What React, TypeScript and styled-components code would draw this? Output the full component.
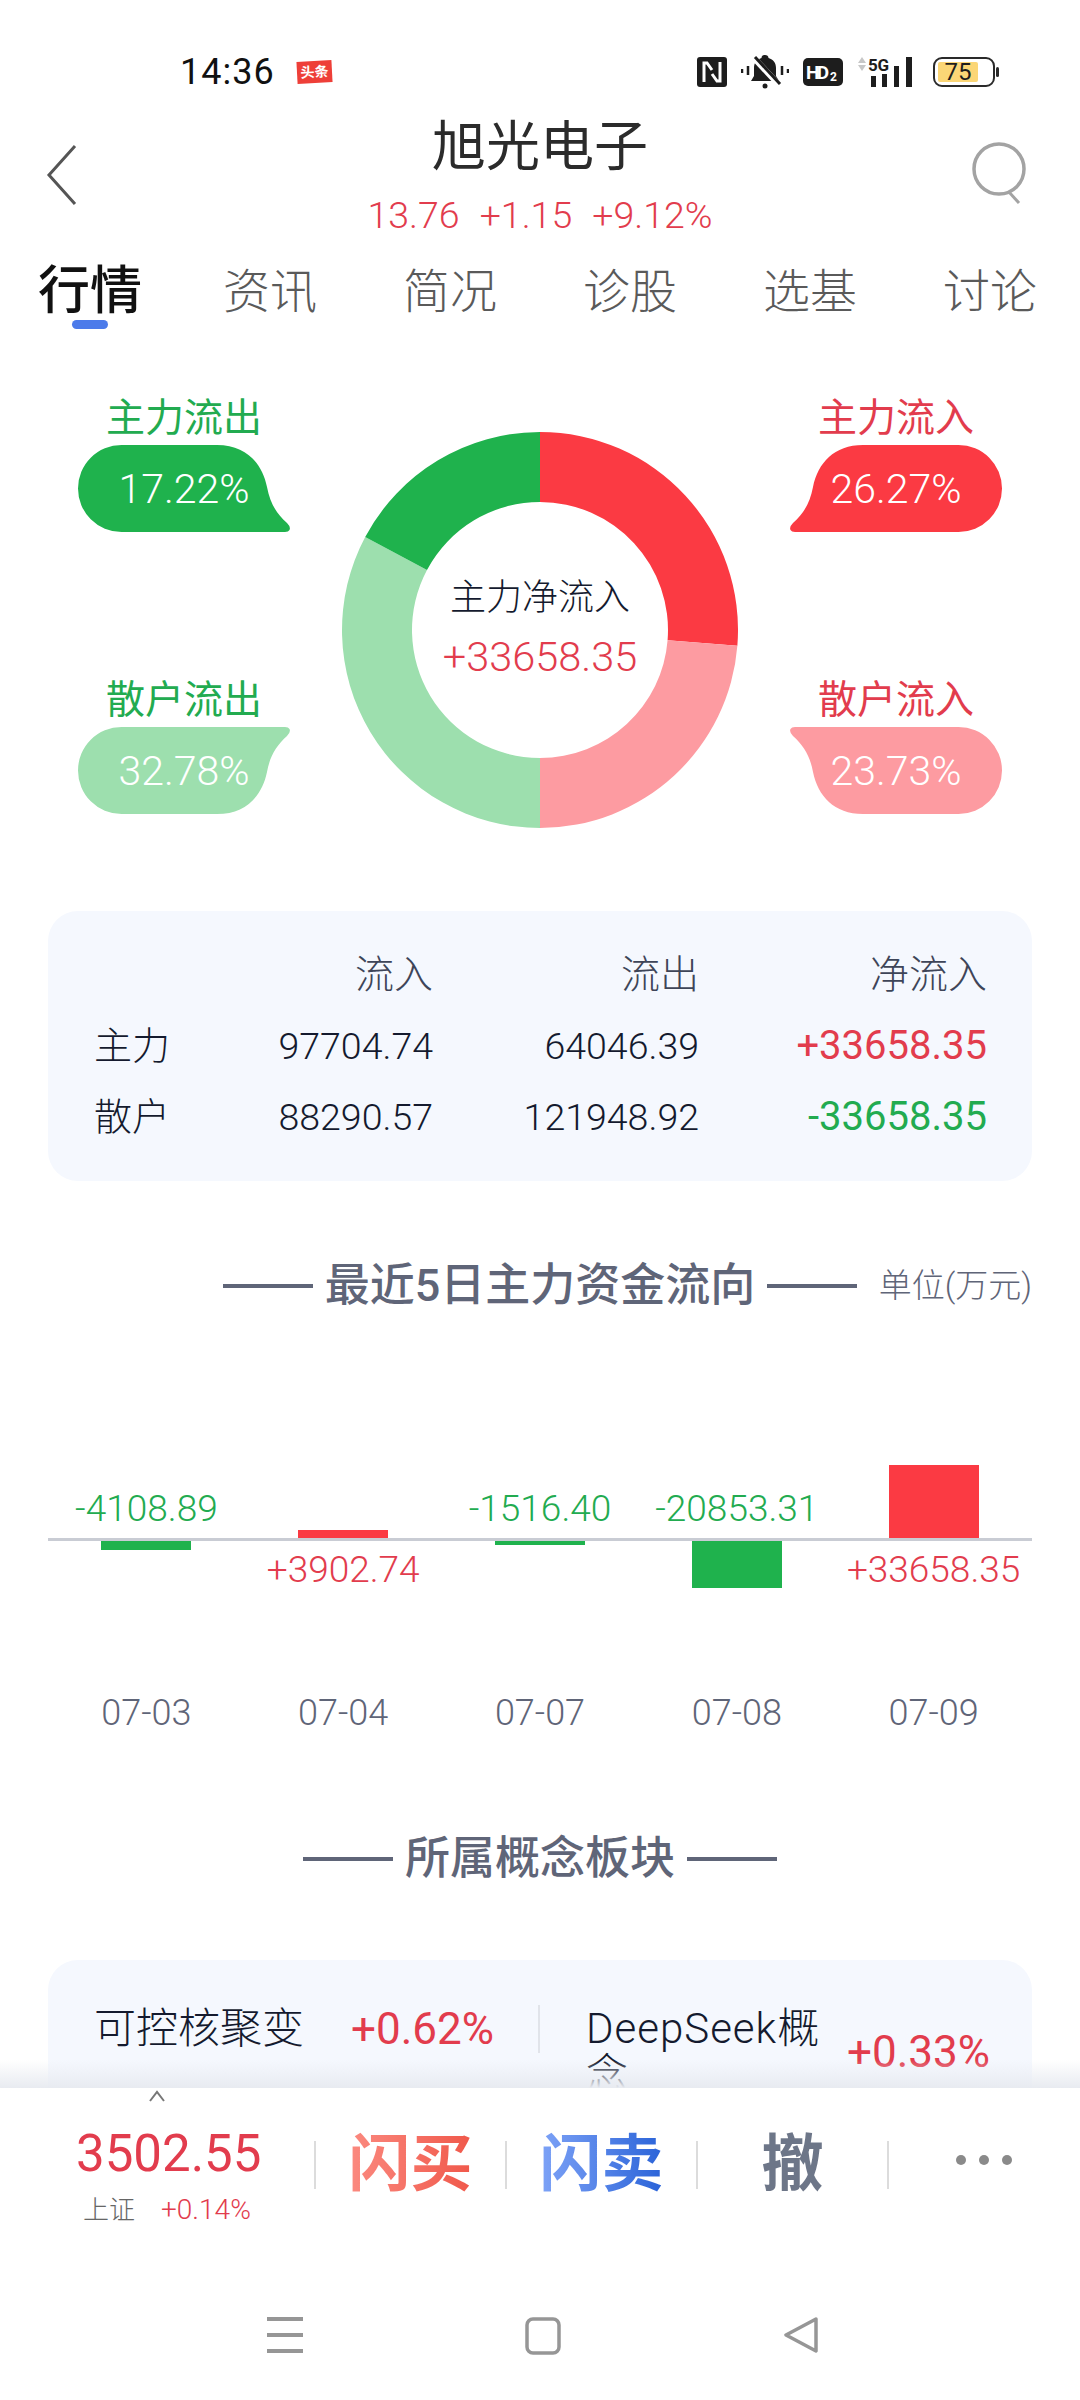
import React from 'react';
import styled, { createGlobalStyle } from 'styled-components';

const RED = '#e23c4d';
const GREEN = '#22ab50';
const SLATE = '#5f6578';
const INK = '#141a2e';

const GlobalStyle = createGlobalStyle`
  html, body {
    margin: 0;
    padding: 0;
    background: #ffffff;
  }
  * {
    box-sizing: border-box;
  }
  body {
    font-family: Roboto, "Noto Sans CJK SC", sans-serif;
    font-weight: 300;
  }
`;

const Page = styled.div`
  width: 1080px;
  height: 2400px;
  display: flex;
  flex-direction: column;
  overflow: hidden;
  background: #ffffff;
`;

const StatusBar = styled.div`
  height: 100px;
  flex: none;
  display: flex;
  align-items: center;
  padding: 44px 81px 0 180px;
  color: #111111;
`;

const Clock = styled.span`
  font-size: 36px;
  font-weight: 400;
  line-height: 56px;
  letter-spacing: 1px;
`;

const NewsBadge = styled.span`
  margin-left: 22px;
  width: 35px;
  height: 22px;
  background: #ee3f38;
  color: #ffffff;
  font-size: 14px;
  line-height: 22px;
  font-weight: 700;
  text-align: center;
  transform: rotate(-3deg);
`;

const StatusIcons = styled.div`
  margin-left: auto;
  display: flex;
  align-items: center;
  gap: 14px;
`;

const Header = styled.header`
  flex: none;
  height: 140px;
  display: grid;
  grid-template-columns: 1fr auto 1fr;
  padding: 12px 54px 0 46px;
`;

const BackSlot = styled.div`
  padding-top: 32px;
`;

const SearchSlot = styled.div`
  padding-top: 30px;
  display: flex;
  justify-content: flex-end;
`;

const TitleBlock = styled.div`
  display: flex;
  flex-direction: column;
  align-items: center;
  transform: translateX(4px);
`;

const Title = styled.h1`
  margin: 0;
  font-size: 54px;
  line-height: 72px;
  font-weight: 400;
  color: #2b2b2b;
  letter-spacing: 0;
`;

const Quote = styled.div`
  margin-top: 9px;
  font-size: 37.5px;
  line-height: 44px;
  color: ${RED};
  display: flex;
  gap: 20px;
`;

const Tabs = styled.nav`
  flex: none;
  height: 96px;
  display: grid;
  grid-template-columns: repeat(6, 180px);
`;

const Tab = styled.div`
  padding-top: 21px;
  display: flex;
  flex-direction: column;
  align-items: center;
`;

const TabLabel = styled.span<{ $active?: boolean }>`
  font-size: ${({ $active }) => ($active ? 52 : 47)}px;
  line-height: 62px;
  height: 59px;
  font-weight: ${({ $active }) => ($active ? 500 : 300)};
  color: ${({ $active }) => ($active ? '#111111' : '#5a5a5a')};
`;

const TabMark = styled.span`
  width: 36px;
  height: 9px;
  border-radius: 5px;
  background: #4c7bea;
`;

const Scroller = styled.main`
  flex: 1;
  min-height: 0;
  overflow: hidden;
`;

const FlowSection = styled.section`
  display: grid;
  grid-template-columns: 212px 396px 212px;
  gap: 52px;
  padding: 61px 78px 0;
`;

const CalloutColumn = styled.div`
  display: flex;
  flex-direction: column;
  gap: 147px;
`;

const Callout = styled.div`
  display: flex;
  flex-direction: column;
  align-items: center;
`;

const CalloutLabel = styled.div<{ $color: string }>`
  font-size: 39px;
  line-height: 42px;
  height: 48px;
  font-weight: 400;
  color: ${({ $color }) => $color};
`;

const Bubble = styled.div`
  position: relative;
  width: 212px;
  height: 87px;
`;

const BubbleShape = styled.svg<{ $flipX?: boolean; $flipY?: boolean }>`
  display: block;
  transform: scale(${({ $flipX }) => ($flipX ? -1 : 1)}, ${({ $flipY }) => ($flipY ? -1 : 1)});
`;

const BubbleValue = styled.span`
  position: absolute;
  inset: 0;
  display: flex;
  align-items: center;
  justify-content: center;
  font-size: 41px;
  color: #ffffff;
`;

const DonutWrap = styled.div`
  position: relative;
  width: 396px;
  height: 396px;
  margin-top: 35px;
`;

const DonutCenter = styled.div`
  position: absolute;
  inset: 0;
  display: flex;
  flex-direction: column;
  align-items: center;
  justify-content: center;
  gap: 13px;
  padding-bottom: 6px;
`;

const DonutTitle = styled.span`
  font-size: 36px;
  line-height: 46px;
  font-weight: 300;
  color: ${INK};
`;

const DonutValue = styled.span`
  font-size: 41.5px;
  line-height: 46px;
  color: ${RED};
`;

const Card = styled.div`
  margin: 0 48px;
  background: #f5f8fe;
  border-radius: 30px;
`;

const FlowTable = styled(Card)`
  margin-top: 83px;
  height: 270px;
  padding: 28px 45px 0 46px;
  display: grid;
  grid-template-columns: 100px 239px 266px 288px;
  grid-auto-rows: 71px;
  align-items: center;
`;

const Cell = styled.div<{ $color?: string; $strong?: boolean; $left?: boolean; $head?: boolean }>`
  font-size: ${({ $strong, $head, $left }) => ($strong ? 40 : $head ? 39 : $left ? 38 : 37.5)}px;
  line-height: 46px;
  text-align: ${({ $left }) => ($left ? 'left' : 'right')};
  font-weight: ${({ $strong }) => ($strong ? 400 : 300)};
  color: ${({ $color }) => $color ?? INK};
`;

const HeadingRow = styled.div<{ $top: number }>`
  margin-top: ${({ $top }) => $top}px;
  padding: 0 48px;
  display: grid;
  grid-template-columns: 1fr auto 1fr;
  align-items: center;
`;

const Heading = styled.h2`
  grid-column: 2;
  margin: 0;
  display: flex;
  align-items: center;
  gap: 12px;
  font-size: 45px;
  line-height: 56px;
  font-weight: 500;
  color: ${SLATE};
`;

const HeadingRule = styled.span`
  width: 90px;
  height: 4px;
  background: ${SLATE};
`;

const Unit = styled.span`
  justify-self: end;
  margin-bottom: 6px;
  font-size: 33px;
  white-space: nowrap;
  color: ${SLATE};
`;

const Chart = styled.div`
  margin: 0 48px;
  padding-top: 77px;
  display: grid;
  grid-template-columns: repeat(5, 1fr);
`;

const ChartColumn = styled.div`
  display: flex;
  flex-direction: column;
  align-items: center;
`;

const UpperHalf = styled.div`
  width: 100%;
  height: 150px;
  display: flex;
  flex-direction: column;
  align-items: center;
  justify-content: flex-end;
  border-bottom: 3px solid #c9ccd4;
`;

const LowerHalf = styled.div`
  width: 100%;
  height: 142px;
  display: flex;
  flex-direction: column;
  align-items: center;
`;

const Bar = styled.div<{ $color: string }>`
  width: 90px;
  flex: none;
  background: ${({ $color }) => $color};
`;

const BarValue = styled.span<{ $color: string; $below?: boolean }>`
  font-size: 37px;
  line-height: 40px;
  white-space: nowrap;
  margin: ${({ $below }) => ($below ? '9px 0 0' : '0 0 9px')};
  color: ${({ $color }) => $color};
`;

const DateLabel = styled.span`
  margin-top: 10px;
  font-size: 36px;
  line-height: 40px;
  color: ${SLATE};
`;

const ConceptCard = styled(Card)`
  margin-top: 73px;
  padding: 46px 46px 0;
  display: flex;
  height: 300px;
`;

const ConceptCell = styled.div`
  display: flex;
  flex: none;
`;

const ConceptName = styled.div<{ $width: number; $spread?: number }>`
  flex: none;
  width: ${({ $width }) => $width}px;
  font-size: 42px;
  line-height: 46px;
  font-weight: 300;
  letter-spacing: ${({ $spread }) => $spread ?? 0}px;
  color: ${INK};
  word-break: break-all;
`;

const ConceptChange = styled.div<{ $top?: number }>`
  margin-top: ${({ $top }) => $top ?? 0}px;
  font-size: 44px;
  line-height: 46px;
  font-weight: 400;
  color: ${RED};
`;

const ConceptRule = styled.div`
  flex: none;
  width: 2px;
  height: 48px;
  margin: -1px 46px 0 44px;
  background: #e1e4ea;
`;

const Footer = styled.footer`
  position: relative;
  flex: none;
  height: 312px;
  background: #ffffff;
  display: flex;
  flex-direction: column;
`;

const FooterShade = styled.div`
  position: absolute;
  left: 0;
  right: 0;
  top: -28px;
  height: 28px;
  background: linear-gradient(to bottom, rgba(232, 235, 241, 0), rgba(232, 235, 241, 1));
`;

const ActionBar = styled.div`
  display: flex;
  height: 184px;
`;

const Ticker = styled.div`
  width: 314px;
  flex: none;
  padding: 2px 0 0 76px;
  display: flex;
  flex-direction: column;
`;

const TickerChevron = styled.svg`
  display: block;
  margin-left: 72px;
`;

const TickerPrice = styled.span`
  margin-top: 22px;
  font-size: 51px;
  line-height: 60px;
  font-weight: 400;
  color: ${RED};
`;

const TickerMeta = styled.div`
  margin: 8px 0 0 7px;
  display: flex;
  gap: 26px;
  font-size: 26px;
  line-height: 36px;
`;

const TickerName = styled.span`
  color: #666666;
`;

const TickerChange = styled.span`
  font-size: 28px;
  color: ${RED};
`;

const Divider = styled.span`
  width: 2px;
  height: 48px;
  margin-top: 53px;
  flex: none;
  background: #dcdcdc;
`;

const Action = styled.div`
  width: 189px;
  flex: none;
  height: 100px;
  margin-top: 27px;
  display: flex;
  align-items: center;
  justify-content: center;
`;

const ActionText = styled.span<{ $from: string; $to: string }>`
  font-size: 62px;
  line-height: 76px;
  font-weight: 700;
  background: linear-gradient(to right, ${({ $from }) => $from}, ${({ $to }) => $to});
  -webkit-background-clip: text;
  background-clip: text;
  color: transparent;
`;

const Dots = styled.div`
  margin: 67px 0 0 67px;
  display: flex;
  gap: 13px;
  height: 10px;
`;

const Dot = styled.span`
  width: 10px;
  height: 10px;
  border-radius: 50%;
  background: #8a8a8a;
`;

const NavBar = styled.div`
  margin-top: 45px;
  padding-left: 5px;
  display: grid;
  grid-template-columns: repeat(3, 258px);
  justify-content: center;
  justify-items: center;
`;

const slices = [
  { pct: 26.27, color: '#fb3a43' },
  { pct: 23.73, color: '#fd9ba1' },
  { pct: 32.78, color: '#9ddfae' },
  { pct: 17.22, color: '#1fb24d' },
];

const sectorPath = (start: number, end: number) => {
  const c = 198;
  const R = 198;
  const r = 128;
  const pt = (rad: number, pct: number) => {
    const a = (pct / 100) * Math.PI * 2;
    return `${(c + rad * Math.sin(a)).toFixed(2)} ${(c - rad * Math.cos(a)).toFixed(2)}`;
  };
  const large = end - start > 50 ? 1 : 0;
  return `M${pt(R, start)} A${R} ${R} 0 ${large} 1 ${pt(R, end)} L${pt(r, end)} A${r} ${r} 0 ${large} 0 ${pt(r, start)} Z`;
};

const Donut = () => {
  let acc = 0;
  return (
    <svg width="396" height="396" viewBox="0 0 396 396">
      {slices.map((s) => {
        const d = sectorPath(acc, acc + s.pct);
        acc += s.pct;
        return <path key={s.color} d={d} fill={s.color} />;
      })}
    </svg>
  );
};

const CalloutItem = ({
  label,
  value,
  labelColor,
  fill,
  flipX,
  flipY,
}: {
  label: string;
  value: string;
  labelColor: string;
  fill: string;
  flipX?: boolean;
  flipY?: boolean;
}) => (
  <Callout>
    <CalloutLabel $color={labelColor}>{label}</CalloutLabel>
    <Bubble>
      <BubbleShape $flipX={flipX} $flipY={flipY} width="212" height="87" viewBox="0 0 212 87">
        <path
          d="M43.5 0H139C168 0 184 18 189 42C192 58 198 68 209 78Q213 82 211.500 85Q210.500 87 207 87H43.500A43.500 43.500 0 0 1 43.500 0Z"
          fill={fill}
        />
      </BubbleShape>
      <BubbleValue>{value}</BubbleValue>
    </Bubble>
  </Callout>
);

const StatusGlyphs = () => (
  <StatusIcons>
    <svg width="30" height="30" viewBox="0 0 30 30">
      <rect width="30" height="30" rx="3" fill="#1d1d1d" />
      <path d="M7 25V6H10L15 13M23 5V24H20L15 17" fill="none" stroke="#fff" strokeWidth="3" />
    </svg>
    <svg width="48" height="36" viewBox="0 0 48 36">
      <path d="M24 1c2 0 3.500 1 3.500 3 5 1.500 7.500 5 7.500 10v8l3 5H10l3-5v-8c0-5 2.500-8.500 7.500-10 0-2 1.500-3 3.500-3z" fill="#1d1d1d" />
      <circle cx="24" cy="32" r="2.500" fill="#1d1d1d" />
      <path d="M12 3L39 32" stroke="#fff" strokeWidth="6" />
      <path d="M14 3L39 30" stroke="#1d1d1d" strokeWidth="3" />
      <path d="M7 12v9M1 15v4M41 12v9M47 15v4" stroke="#1d1d1d" strokeWidth="2.500" />
    </svg>
    <svg width="40" height="28" viewBox="0 0 40 28">
      <rect width="40" height="28" rx="5" fill="#1d1d1d" />
      <text x="3" y="21" fontSize="19" fontWeight="700" fontFamily="Roboto, sans-serif" fill="#fff" textLength="23">HD</text>
      <text x="27" y="23" fontSize="12" fontWeight="700" fontFamily="Roboto, sans-serif" fill="#fff">2</text>
    </svg>
    <svg width="62" height="32" viewBox="0 0 62 32">
      <path d="M5 1L9 7H1zM5 15L1 9H9z" fill="#c7c7c7" />
      <text x="11" y="15" fontSize="17" fontWeight="700" fontFamily="Roboto, sans-serif" fill="#1d1d1d" textLength="21">5G</text>
      <path d="M14 20h5v11h-5zM25 18h5v13h-5zM37 10h5v21h-5zM49 1h6v30h-6z" fill="#1d1d1d" />
    </svg>
    <svg width="66" height="30" viewBox="0 0 66 30">
      <rect x="1" y="1" width="60" height="28" rx="8" fill="#fff" stroke="#2a2a2a" strokeWidth="2" />
      <rect x="5" y="5" width="40" height="20" rx="2" fill="#fbd676" />
      <text x="25" y="23" textAnchor="middle" fontSize="24" fontFamily="Roboto, sans-serif" fontWeight="400" fill="#1d1d1d">75</text>
      <rect x="63" y="10" width="3" height="10" rx="1.500" fill="#2a2a2a" />
    </svg>
  </StatusIcons>
);

const days = [
  { date: '07-03', value: '-4108.89', height: 9 },
  { date: '07-04', value: '+3902.74', height: 8 },
  { date: '07-07', value: '-1516.40', height: 4 },
  { date: '07-08', value: '-20853.31', height: 47 },
  { date: '07-09', value: '+33658.35', height: 73 },
];

export default function App() {
  return (
    <Page>
      <GlobalStyle />
      <StatusBar>
        <Clock>14:36</Clock>
        <NewsBadge>头条</NewsBadge>
        <StatusGlyphs />
      </StatusBar>

      <Header>
        <BackSlot>
          <svg width="32" height="62" viewBox="0 0 32 62">
            <path d="M29 2L3 31L29 60" fill="none" stroke="#555" strokeWidth="3" />
          </svg>
        </BackSlot>
        <TitleBlock>
          <Title>旭光电子</Title>
          <Quote>
            <span>13.76</span>
            <span>+1.15</span>
            <span>+9.12%</span>
          </Quote>
        </TitleBlock>
        <SearchSlot>
          <svg width="54" height="62" viewBox="0 0 54 62">
            <ellipse cx="27" cy="27" rx="25" ry="25" fill="none" stroke="#a3a3a3" strokeWidth="3.500" />
            <path d="M37 50L47 61" stroke="#a3a3a3" strokeWidth="3" />
          </svg>
        </SearchSlot>
      </Header>

      <Tabs>
        <Tab>
          <TabLabel $active>行情</TabLabel>
          <TabMark />
        </Tab>
        {['资讯', '简况', '诊股', '选基', '讨论'].map((t) => (
          <Tab key={t}>
            <TabLabel>{t}</TabLabel>
          </Tab>
        ))}
      </Tabs>

      <Scroller>
        <FlowSection>
          <CalloutColumn>
            <CalloutItem label="主力流出" value="17.22%" labelColor={GREEN} fill="#1fb24d" />
            <CalloutItem label="散户流出" value="32.78%" labelColor={GREEN} fill="#9ddfae" flipY />
          </CalloutColumn>
          <DonutWrap>
            <Donut />
            <DonutCenter>
              <DonutTitle>主力净流入</DonutTitle>
              <DonutValue>+33658.35</DonutValue>
            </DonutCenter>
          </DonutWrap>
          <CalloutColumn>
            <CalloutItem label="主力流入" value="26.27%" labelColor={RED} fill="#fb3a43" flipX />
            <CalloutItem label="散户流入" value="23.73%" labelColor={RED} fill="#fd9ba1" flipX flipY />
          </CalloutColumn>
        </FlowSection>

        <FlowTable>
          <Cell />
          <Cell $color="#3e4558" $head>流入</Cell>
          <Cell $color="#3e4558" $head>流出</Cell>
          <Cell $color="#3e4558" $head>净流入</Cell>
          <Cell $left>主力</Cell>
          <Cell>97704.74</Cell>
          <Cell>64046.39</Cell>
          <Cell $color={RED} $strong>+33658.35</Cell>
          <Cell $left>散户</Cell>
          <Cell>88290.57</Cell>
          <Cell>121948.92</Cell>
          <Cell $color={GREEN} $strong>-33658.35</Cell>
        </FlowTable>

        <HeadingRow $top={77}>
          <Heading>
            <HeadingRule />
            最近5日主力资金流向
            <HeadingRule />
          </Heading>
          <Unit>单位(万元)</Unit>
        </HeadingRow>

        <Chart>
          {days.map((d) => {
            const up = d.value.startsWith('+');
            const color = up ? '#fb3a43' : '#1fb24d';
            const text = up ? RED : GREEN;
            return (
              <ChartColumn key={d.date}>
                <UpperHalf>
                  {up ? (
                    <Bar $color={color} style={{ height: d.height }} />
                  ) : (
                    <BarValue $color={text}>{d.value}</BarValue>
                  )}
                </UpperHalf>
                <LowerHalf>
                  {up ? (
                    <BarValue $color={text} $below>{d.value}</BarValue>
                  ) : (
                    <Bar $color={color} style={{ height: d.height }} />
                  )}
                </LowerHalf>
                <DateLabel>{d.date}</DateLabel>
              </ChartColumn>
            );
          })}
        </Chart>

        <HeadingRow $top={98}>
          <Heading>
            <HeadingRule />
            所属概念板块
            <HeadingRule />
          </Heading>
        </HeadingRow>

        <ConceptCard>
          <ConceptCell>
            <ConceptName $width={257}>可控核聚变</ConceptName>
            <ConceptChange>+0.62%</ConceptChange>
          </ConceptCell>
          <ConceptRule />
          <ConceptCell>
            <ConceptName $width={261} $spread={1}>DeepSeek概念</ConceptName>
            <ConceptChange $top={23}>+0.33%</ConceptChange>
          </ConceptCell>
        </ConceptCard>
      </Scroller>

      <Footer>
        <FooterShade />
        <ActionBar>
          <Ticker>
            <TickerChevron width="18" height="12" viewBox="0 0 18 12">
              <path d="M2 11L9 2L16 11" fill="none" stroke="#777" strokeWidth="2" />
            </TickerChevron>
            <TickerPrice>3502.55</TickerPrice>
            <TickerMeta>
              <TickerName>上证</TickerName>
              <TickerChange>+0.14%</TickerChange>
            </TickerMeta>
          </Ticker>
          <Divider />
          <Action>
            <ActionText $from="#fb8a80" $to="#f0584a">闪买</ActionText>
          </Action>
          <Divider />
          <Action>
            <ActionText $from="#7ea3f7" $to="#2a63d8">闪卖</ActionText>
          </Action>
          <Divider />
          <Action>
            <ActionText $from="#6d7688" $to="#6d7688">撤</ActionText>
          </Action>
          <Divider />
          <Dots>
            <Dot />
            <Dot />
            <Dot />
          </Dots>
        </ActionBar>
        <NavBar>
          <svg width="36" height="36" viewBox="0 0 36 36">
            <path d="M0 2H36M0 18H36M0 34H36" stroke="#969696" strokeWidth="4" />
          </svg>
          <svg width="36" height="38" viewBox="0 0 36 38">
            <rect x="2" y="2" width="32" height="34" rx="6" fill="none" stroke="#969696" strokeWidth="3.500" />
          </svg>
          <svg width="36" height="36" viewBox="0 0 36 36">
            <path d="M33 2L3 18L33 34Z" fill="none" stroke="#969696" strokeWidth="3.500" strokeLinejoin="round" />
          </svg>
        </NavBar>
      </Footer>
    </Page>
  );
}
